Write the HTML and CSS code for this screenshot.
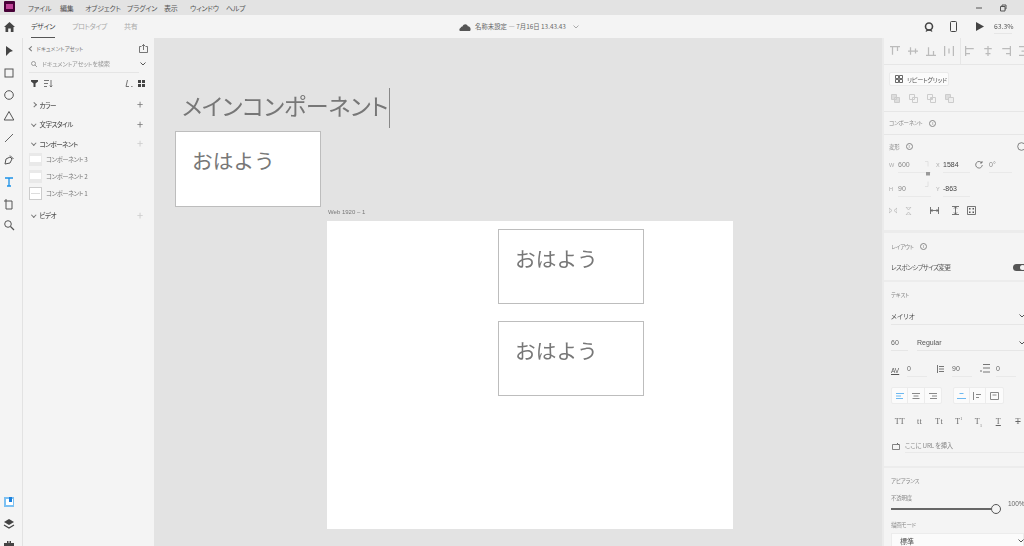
FILE: index.html
```html
<!DOCTYPE html>
<html lang="ja">
<head><meta charset="utf-8"><title>Adobe XD</title><link rel="stylesheet" href="styles.css"></head>
<body>
<div class="app">
  <header class="menubar">
    <svg class="xd" width="11" height="11" viewBox="0 0 11 11"><rect width="11" height="11" rx="1" fill="#470137"/><rect x="2" y="3" width="7" height="5" fill="#e75ab8" opacity=".75"/></svg>
    <nav class="menu"><span>ファイル</span><span>編集</span><span>オブジェクト</span><span>プラグイン</span><span>表示</span><span>ウィンドウ</span><span>ヘルプ</span></nav>
    <div class="winctl">
      <svg width="8" height="8" viewBox="0 0 8 8"><path d="M1 4h6" stroke="#555"/></svg>
      <svg width="8" height="8" viewBox="0 0 8 8"><path d="M1.500 2.500h4.500v4.500h-4.500zM3 2.500v-1.500h4v4h-1" fill="none" stroke="#555"/></svg>
      <svg width="8" height="8" viewBox="0 0 8 8"><path d="M1 1l6 6M7 1l-6 6" stroke="#555"/></svg>
    </div>
  </header>
  <div class="tabbar">
    <div class="tabs">
      <svg class="home" width="11" height="10" viewBox="0 0 11 10"><path d="M5.500 0L11 5H9.500v5H6.800V6.500H4.200V10H1.500V5H0z" fill="#444"/></svg>
      <span class="tab active">デザイン</span><span class="tab">プロトタイプ</span><span class="tab">共有</span>
    </div>
    <div class="doc">
      <svg width="12" height="8" viewBox="0 0 12 8"><path d="M1.500 8C0 8 0 5.500 1.500 5 2 3.500 3 3.500 3.500 3.500 4.500.5 8 .5 8.800 3.200 11 3 12.500 6 11 8z" fill="#555"/></svg>
      <span>名称未設定 — 7月16日 13.43.43</span>
      <svg class="chev" width="6" height="4" viewBox="0 0 6 4"><path d="M.5.500L3 3 5.500.500" fill="none" stroke="#aaa"/></svg>
    </div>
    <div class="view">
      <svg width="10" height="10" viewBox="0 0 10 10"><circle cx="5" cy="4.500" r="3.500" fill="none" stroke="#444" stroke-width="1.600"/><path d="M2 9.500c1-2 5-2 6 0" stroke="#444" fill="none" stroke-width="1.300"/></svg>
      <svg width="7" height="11" viewBox="0 0 7 11"><rect x=".5" y=".5" width="6" height="10" rx="1" fill="none" stroke="#444"/></svg>
      <svg width="8" height="9" viewBox="0 0 8 9"><path d="M0 0l8 4.500L0 9z" fill="#444"/></svg>
      <span class="zoomval">63.3%</span>
    </div>
  </div>
  <div class="main">
    <aside class="rail">
      <svg viewBox="0 0 12 12"><path d="M3 1l7 5-3 1-4 4z" fill="#444"/></svg>
      <svg viewBox="0 0 12 12"><rect x="2" y="2" width="8" height="8" fill="none" stroke="#555"/></svg>
      <svg viewBox="0 0 12 12"><circle cx="6" cy="6" r="4.300" fill="none" stroke="#555"/></svg>
      <svg viewBox="0 0 12 12"><path d="M6 1.500l4.800 8.500H1.200z" fill="none" stroke="#555"/></svg>
      <svg viewBox="0 0 12 12"><path d="M2 10l8-8" stroke="#666"/></svg>
      <svg viewBox="0 0 12 12"><path d="M2 10l1-5 4-2 2 2-2 4zM7 1.500l3.500 3.500" fill="none" stroke="#555"/></svg>
      <svg viewBox="0 0 12 12"><path d="M2 2h8M6 2v8M4 10h4" stroke="#1b91e8" stroke-width="1.300" fill="none"/></svg>
      <svg viewBox="0 0 12 12"><path d="M3 1v2M1 3h8v8H3V3" fill="none" stroke="#555"/></svg>
      <svg viewBox="0 0 12 12"><circle cx="5" cy="5" r="3.300" fill="none" stroke="#555"/><path d="M7.500 7.500L11 11" stroke="#555" stroke-width="1.200"/></svg>
      <div class="rail-bottom">
        <svg viewBox="0 0 12 12"><rect x="1" y="1" width="10" height="10" fill="#7cc0f2"/><rect x="3" y="3" width="7" height="6" fill="#fff"/><rect x="6" y="1" width="3" height="5" fill="#1b7fdc"/></svg>
        <svg viewBox="0 0 12 12"><path d="M6 1l5 3-5 3-5-3z" fill="#444"/><path d="M1 7l5 3 5-3" fill="none" stroke="#444" stroke-width="1.300"/></svg>
        <svg viewBox="0 0 12 12"><path d="M1 4h3V2h1.500v2h1V2H8v2h3v8H1z" fill="#444"/></svg>
      </div>
    </aside>
    <section class="assets">
      <div class="a-head"><i class="car left"></i><span>ドキュメントアセット</span>
        <svg class="push" width="9" height="9" viewBox="0 0 9 9"><path d="M2.500 2.500H.5v6h8v-6h-2M4.500 6V.5M3 2l1.500-1.500L6 2" fill="none" stroke="#555" stroke-width=".8"/></svg></div>
      <div class="a-search">
        <svg width="6" height="6" viewBox="0 0 6 6"><circle cx="2.500" cy="2.500" r="2" fill="none" stroke="#888" stroke-width=".8"/><path d="M4 4l2 2" stroke="#888" stroke-width=".8"/></svg>
        <span>ドキュメントアセットを検索</span>
        <svg class="a-chev" width="6" height="4" viewBox="0 0 6 4"><path d="M.5.500L3 3 5.500.500" fill="none" stroke="#555"/></svg>
      </div>
      <div class="a-tools">
        <svg width="7" height="7" viewBox="0 0 7 7"><path d="M0 0h7v1.500L4.500 3.500V7h-2V3.500L0 1.500z" fill="#444"/></svg>
        <svg width="9" height="7" viewBox="0 0 9 7"><path d="M0 .5h5M0 3.500h4M0 6.500h3M7 0v6.500M5.800 5.500L7 7l1.200-1.500" fill="none" stroke="#555" stroke-width=".8"/></svg>
        <svg class="push" width="8" height="7" viewBox="0 0 8 7"><path d="M2.500 0L1 6.500h3M6 6.500h.8M7.500 6.500H8" fill="none" stroke="#555" stroke-width=".8"/></svg>
        <svg width="7" height="7" viewBox="0 0 7 7"><path d="M0 0h3v3H0zM4 0h3v3H4zM0 4h3v3H0zM4 4h3v3H4z" fill="#444"/></svg>
      </div>
      <div class="a-sec sec-color"><i class="car right"></i><b>カラー</b><i class="plus">+</i></div>
      <div class="a-sec"><i class="car down"></i><b>文字スタイル</b><i class="plus">+</i></div>
      <div class="a-sec"><i class="car down"></i><b>コンポーネント</b><i class="plus dim">+</i></div>
      <div class="comps">
        <div class="comp"><div class="thumb"><em></em></div><span>コンポーネント 3</span></div>
        <div class="comp"><div class="thumb"><em></em></div><span>コンポーネント 2</span></div>
        <div class="comp"><div class="thumb boxed"><em></em></div><span>コンポーネント 1</span></div>
      </div>
      <div class="a-sec sec-video"><i class="car down"></i><b>ビデオ</b><i class="plus dim">+</i></div>
    </section>
    <main class="canvas">
      <div class="main-title">メインコンポーネント</div>
      <div class="caret"></div>
      <div class="card card-main">おはよう</div>
      <div class="ab-label">Web 1920 – 1</div>
      <div class="artboard"></div>
      <div class="card card-a">おはよう</div>
      <div class="card card-b">おはよう</div>
    </main>
    <aside class="props">
      <div class="p-align">
        <svg viewBox="0 0 8 8"><path d="M0 .5h8M2 1v6M6 1v3" stroke="#bbb" fill="none"/></svg>
        <svg viewBox="0 0 8 8"><path d="M0 4h8M2 1v6M6 2v4" stroke="#bbb" fill="none"/></svg>
        <svg viewBox="0 0 8 8"><path d="M0 7.500h8M2 1v6M6 4v3" stroke="#bbb" fill="none"/></svg>
        <svg viewBox="0 0 8 8"><path d="M.5 0v8M7.500 0v8M4 2v4" stroke="#bbb" fill="none"/></svg>
        <i class="vdiv"></i>
        <svg viewBox="0 0 8 8"><path d="M.5 0v8M1 2h6M1 6h3" stroke="#bbb" fill="none"/></svg>
        <svg viewBox="0 0 8 8"><path d="M4 0v8M1 2h6M2 6h4" stroke="#bbb" fill="none"/></svg>
        <svg viewBox="0 0 8 8"><path d="M7.500 0v8M1 2h6M4 6h3" stroke="#bbb" fill="none"/></svg>
        <svg viewBox="0 0 8 8"><path d="M0 .5h8M0 7.500h8M2 4h4" stroke="#bbb" fill="none"/></svg>
      </div>
      <div class="p-repeat">
        <button class="rg"><svg width="8" height="8" viewBox="0 0 8 8"><path d="M.5.500h3v3h-3zM4.500.500h3v3h-3zM.5 4.500h3v3h-3zM4.500 4.500h3v3h-3z" fill="none" stroke="#444" stroke-width=".8"/></svg><span>リピートグリッド</span></button>
        <div class="bool">
          <svg width="9" height="9" viewBox="0 0 9 9"><path d="M.5.500h5v5h-5zM3.500 3.500h5v5h-5z" fill="#ddd" stroke="#ccc"/></svg>
          <svg width="9" height="9" viewBox="0 0 9 9"><path d="M.5.500h5v5h-5zM3.500 3.500h5v5h-5z" fill="none" stroke="#ccc"/></svg>
          <svg width="9" height="9" viewBox="0 0 9 9"><path d="M.5.500h5v5h-5zM3.500 3.500h5v5h-5z" fill="none" stroke="#ccc"/><rect x="3.500" y="3.500" width="2" height="2" fill="#ccc"/></svg>
          <svg width="9" height="9" viewBox="0 0 9 9"><path d="M.5.500h5v5h-5z" fill="#ddd" stroke="#ccc"/><path d="M3.500 3.500h5v5h-5z" fill="#eee" stroke="#ccc"/></svg>
        </div>
      </div>
      <div class="p-label-row"><span class="lbl">コンポーネント</span><i class="info">i</i></div>
      <div class="p-trans">
        <div class="t-head"><span class="lbl">変形</span><i class="info">i</i>
          <svg class="t-flip" width="9" height="9" viewBox="0 0 9 9"><circle cx="4.500" cy="4.500" r="3.800" fill="none" stroke="#666" stroke-width=".8"/></svg></div>
        <div class="t-grid">
          <span class="k">W</span><span class="v dim">600</span><span class="k">X</span><span class="v">1584</span>
          <svg width="8" height="8" viewBox="0 0 8 8"><path d="M6.800 2A3.300 3.300 0 1 0 7.300 4M7 0v2H5" fill="none" stroke="#666" stroke-width=".8"/></svg><span class="v dim">0°</span>
          <span class="k">H</span><span class="v dim">90</span><span class="k">Y</span><span class="v">-863</span>
          <svg class="link" width="6" height="26" viewBox="0 0 6 26"><path d="M1 .5h3v5M1 25.500h3v-5" fill="none" stroke="#ddd" stroke-width=".8"/><rect x="2" y="11" width="4" height="3.500" fill="#999"/></svg>
        </div>
        <div class="t-icons">
          <svg width="8" height="7" viewBox="0 0 8 7"><path d="M0 1v5l3-2.500zM8 1v5L5 3.500z" fill="none" stroke="#bbb" stroke-width=".8"/></svg>
          <svg width="7" height="8" viewBox="0 0 7 8"><path d="M1 0h5L3.500 3zM1 8h5L3.500 5z" fill="none" stroke="#bbb" stroke-width=".8"/></svg>
          <svg class="gap" width="9" height="7" viewBox="0 0 9 7"><path d="M.5 0v7M8.500 0v7M1 3.500h7M2.500 2L1 3.500 2.500 5M6.500 2L8 3.500 6.500 5" fill="none" stroke="#555" stroke-width=".8"/></svg>
          <svg class="gap2" width="7" height="9" viewBox="0 0 7 9"><path d="M0 .5h7M0 8.500h7M3.500 1v7M2 2.500L3.500 1 5 2.500M2 6.500L3.500 8 5 6.500" fill="none" stroke="#555" stroke-width=".8"/></svg>
          <svg width="9" height="9" viewBox="0 0 9 9"><path d="M.5.500h8v8h-8z" fill="none" stroke="#555" stroke-width=".8"/><path d="M2 2h1.500v1.500H2zM5.500 2H7v1.500H5.500zM2 5.500h1.500V7H2zM5.500 5.500H7V7H5.500z" fill="#555"/></svg>
        </div>
      </div>
      <div class="p-layout">
        <div class="t-head"><span class="lbl">レイアウト</span><i class="info">i</i></div>
        <div class="resp"><span>レスポンシブサイズ変更</span><i class="toggle"></i></div>
      </div>
      <div class="p-text">
        <span class="lbl">テキスト</span>
        <div class="sel font"><span>メイリオ</span><svg width="6" height="4" viewBox="0 0 6 4"><path d="M.5.500L3 3 5.500.500" fill="none" stroke="#555"/></svg></div>
        <div class="size"><span class="sz">60</span><div class="sel weight"><span>Regular</span><svg width="6" height="4" viewBox="0 0 6 4"><path d="M.5.500L3 3 5.500.500" fill="none" stroke="#555"/></svg></div></div>
        <div class="metrics">
          <span class="av">AV</span><span class="m">0</span>
          <svg class="mi1" width="8" height="8" viewBox="0 0 8 8"><path d="M1.500 0v8M3 1.500h5M3 4h5M3 6.500h5" stroke="#555" stroke-width=".8" fill="none"/></svg><span class="m">90</span>
          <svg class="mi2" width="10" height="9" viewBox="0 0 10 9"><path d="M3 .5h7M3 4h7M3 8h7M0 7h2" stroke="#555" stroke-width=".8" fill="none"/></svg><span class="m">0</span>
        </div>
        <div class="aligns">
          <div class="grp">
            <b class="on"><svg width="8" height="6" viewBox="0 0 8 6"><path d="M0 .5h8M0 3h5M0 5.500h7" stroke="#6db8f0" fill="none"/></svg></b>
            <b><svg width="8" height="6" viewBox="0 0 8 6"><path d="M0 .5h8M1.500 3h5M.5 5.500h7" stroke="#888" fill="none"/></svg></b>
            <b><svg width="8" height="6" viewBox="0 0 8 6"><path d="M0 .5h8M3 3h5M1 5.500h7" stroke="#888" fill="none"/></svg></b>
          </div>
          <div class="grp">
            <b class="on"><svg width="9" height="6" viewBox="0 0 9 6"><path d="M2.500.5h4M0 5.500h9" stroke="#6db8f0" fill="none"/></svg></b>
            <b><svg width="9" height="8" viewBox="0 0 9 8"><path d="M.5 0v8M3 2.500h5M3 5.500h3" stroke="#888" fill="none"/></svg></b>
            <b><svg width="9" height="8" viewBox="0 0 9 8"><path d="M.5.500h8v7h-8zM2.500 3h4" stroke="#888" fill="none"/></svg></b>
          </div>
        </div>
        <div class="styles"><span>TT</span><span>tt</span><span>Tt</span><span>T<sup>1</sup></span><span>T<sub>1</sub></span><span class="u">T</span><span class="s">T</span></div>
        <div class="url"><svg width="8" height="7" viewBox="0 0 8 7"><path d="M.5 1.500h7v5h-7z" fill="none" stroke="#666" stroke-width=".8"/><path d="M5 0l2 2" stroke="#666"/></svg><span>ここに URL を挿入</span></div>
      </div>
      <div class="p-appear">
        <span class="lbl">アピアランス</span>
        <span class="lbl op">不透明度</span>
        <div class="slider"><i class="track"></i><i class="knob"></i><span>100%</span></div>
        <span class="lbl blend">描画モード</span>
        <div class="sel std"><span>標準</span><svg width="6" height="4" viewBox="0 0 6 4"><path d="M.5.500L3 3 5.500.500" fill="none" stroke="#555"/></svg></div>
      </div>
    </aside>
  </div>
</div>
</body>
</html>
```
FILE: styles.css
```css
*{box-sizing:border-box;margin:0;padding:0}
html,body{width:1024px;height:546px;overflow:hidden}
body{font-family:"Noto Sans CJK JP","Noto Sans",sans-serif;color:#555;background:#e3e3e3;font-feature-settings:"palt";filter:blur(.4px)}
i,em{font-style:normal}
.app{display:grid;grid-template-rows:15px 23px 508px;height:546px}
.menubar{display:flex;align-items:center;background:#e3e3e3;padding-left:4px;font-size:7px}
.xd{margin-top:-2px}
.menu{display:grid;grid-template-columns:32px 25px 42px 37px 26px 36px auto;margin-left:13px;color:#555;letter-spacing:-.2px}
.winctl{margin-left:auto;display:flex;gap:16px;margin-right:-7px}
.tabbar{display:grid;grid-template-columns:459px 1fr auto;align-items:center;background:#f4f4f4;font-size:7px}
.tabs{display:flex;align-items:center;padding-left:4px;height:23px}
.home{margin-right:16px}
.tab{margin-right:17px;color:#aaa;height:23px;line-height:22px;border-bottom:1px solid transparent;letter-spacing:-.4px}
.tab.active{color:#444;border-bottom:1px solid #555}
.doc{display:flex;align-items:center;gap:4px;font-size:6.400px;color:#666}
.chev{margin-left:3px}
.view{display:flex;align-items:center;padding-right:12px}
.view svg:nth-child(1){margin-right:16px}
.view svg:nth-child(2){margin-right:19px}
.view svg:nth-child(3){margin-right:10px}
.zoomval{font-size:6.800px;width:18px;color:#555;line-height:13px;border-bottom:1px solid #e6e6e6}
.main{display:grid;grid-template-columns:23px 131px 728px 142px;height:508px}
.rail{display:flex;flex-direction:column;align-items:center;background:#f4f4f4;border-right:1px solid #e2e2e2;padding-top:7px;gap:9.800px}
.rail svg{width:12px;height:12px;flex:none;margin-right:4px}
.rail-bottom{margin-top:auto;display:flex;flex-direction:column;gap:9.500px;margin-bottom:-5px}
.assets{background:#f4f4f4;padding:0 6px;font-size:6.500px}
.a-head{display:flex;align-items:center;height:21px;gap:3px;font-size:5.500px;color:#777}
.push{margin-left:auto}
.a-search{display:flex;align-items:center;height:17px;gap:5px;padding-left:2px;font-size:6.200px;letter-spacing:-.25px;color:#999;position:relative;margin-top:-4px}
.a-search::after{content:"";position:absolute;left:0;bottom:-1px;width:110px;height:1px;background:#e5e5e5}
.a-chev{margin-left:auto;margin-right:2px}
.a-tools{display:flex;align-items:center;gap:6px;height:21px;margin-top:1px;padding:0 3px 0 2px}
.a-tools .push+svg{margin-left:-1px}
.a-sec{display:flex;align-items:center;height:19.500px;font-size:6.500px;color:#555;padding-left:2px}
.sec-color{margin-top:1px}
.a-sec b{font-weight:500;margin-left:4px;letter-spacing:-.5px}
.car{display:block;width:3.500px;height:3.500px;border-right:1px solid #777;border-bottom:1px solid #777;flex:none;margin-left:1px}
.car.right{transform:rotate(-45deg)}
.car.left{transform:rotate(135deg)}
.car.down{transform:rotate(45deg);margin-top:-2px}
.plus{margin-left:auto;margin-right:5px;font-size:11px;line-height:11px;color:#777}
.plus.dim{color:#ccc}
.comps{margin-top:-3px}
.comp{display:flex;align-items:center;height:17px;gap:4px;font-size:6.300px;letter-spacing:-.45px;color:#777}
.thumb{width:13px;height:13px;background:#e9e9e9;display:flex;align-items:center;justify-content:center}
.thumb em{display:block;width:11px;height:6px;background:#fff}
.thumb.boxed{background:#fff;border:1px solid #ccc}
.thumb.boxed em{width:9px;height:1px;background:#ddd}
.sec-video{margin-top:4px}
.canvas{position:relative;background:#e3e3e3;overflow:hidden}
.main-title{position:absolute;left:28px;top:49px;font-size:23px;line-height:36px;color:#777;white-space:nowrap;letter-spacing:-.2px}
.caret{position:absolute;left:235px;top:50px;width:1px;height:40px;background:#888}
.card{position:absolute;width:146px;height:76px;background:#fff;border:1px solid #bdbdbd;font-size:20.700px;line-height:30px;color:#777;padding:13px 0 0 16px;font-feature-settings:normal}
.card-main{left:21px;top:93px}
.card-a{left:344px;top:191px;height:75px}
.card-b{left:344px;top:283px;height:75px}
.ab-label{position:absolute;left:174px;top:170px;font-size:6px;line-height:9px;color:#777;font-family:"Liberation Sans",sans-serif}
.artboard{position:absolute;left:173px;top:183px;width:406px;height:308px;background:#fff}
.props{background:#f4f4f4;border-left:2px solid #ebebeb;font-size:7px;overflow:hidden;width:142px}
.p-align{display:flex;align-items:center;height:28px;padding-left:6px;border-bottom:1px solid #e6e6e6;gap:8px;margin-top:-1px}
.p-align svg{width:10px;height:10px;flex:none}
.vdiv{width:1px;height:28px;background:#e6e6e6;margin:0 -4px 0 -2px;flex:none}
.p-repeat{height:47px;padding:7px 0 0 5px;border-bottom:1px solid #e6e6e6}
.rg{display:flex;align-items:center;gap:4px;width:60px;height:14px;padding-left:5px;background:#fbfbfb;border:1px solid #eaeaea;border-radius:2px;font:6.200px "Noto Sans CJK JP",sans-serif;font-feature-settings:"palt";letter-spacing:-.3px;color:#555;white-space:nowrap}
.bool{display:flex;gap:9px;padding:8px 0 0 2px}
.lbl{font-size:5.500px;color:#888;display:block;letter-spacing:-.25px}
.p-label-row{display:flex;align-items:center;gap:7px;height:23px;padding-left:5px;border-bottom:1px solid #e6e6e6}
.info{display:inline-flex;align-items:center;justify-content:center;width:7px;height:7px;border:1px solid #888;border-radius:50%;font-size:4.500px;line-height:5px;color:#777}
.p-trans{height:98px;padding:7px 0 0 5px;border-bottom:3px solid #ececec}
.t-head{display:flex;align-items:center;gap:6px;height:9px}
.t-flip{margin-left:auto;margin-right:-2px}
.t-grid{position:relative;display:grid;grid-template-columns:9px 38px 7px 32px 14px 28px;grid-auto-rows:24px;align-items:center;margin-top:2px;font-size:7px}
.link{position:absolute;left:35px;top:8px}
.k{font-size:5.500px;color:#aaa;font-family:"Liberation Sans",sans-serif}
.v{font-family:"Liberation Sans",sans-serif;color:#444;line-height:15px;height:16px;border-bottom:1px solid #e9e9e9;margin-right:5px}
.v.dim{color:#888}
.t-icons{display:flex;align-items:center;gap:8px;margin-top:5px}
.t-icons svg{flex:none}
.t-icons .gap{margin-left:10px}
.t-icons .gap2{margin-left:5px}
.p-layout{height:49px;padding:9px 0 0 7px;border-bottom:2px solid #ececec}
.resp{display:flex;align-items:center;justify-content:space-between;height:12px;margin-top:10px;font-size:6.500px;letter-spacing:-.6px;color:#555}
.toggle{width:16px;height:7px;border-radius:4px;background:#555;margin-right:-5px;position:relative}
.toggle::after{content:"";position:absolute;right:4px;top:1px;width:5px;height:5px;border-radius:50%;background:#f4f4f4}
.p-text{height:186px;padding:9px 0 0 7px;border-bottom:2px solid #ececec}
.sel{display:flex;align-items:center;justify-content:space-between;border-bottom:1px solid #e6e6e6;color:#555}
.sel svg{flex:none;margin-right:-1px}
.font{height:18px;margin-top:8px;font-size:6.800px}
.size{display:flex;height:26px;font-family:"Liberation Sans",sans-serif;font-size:7px}
.sz{width:17px;padding-top:10px;line-height:15px;margin-right:9px;border-bottom:1px solid #e6e6e6;color:#666}
.weight{flex:1;height:26px;padding-top:10px;font-family:"Liberation Sans",sans-serif}
.metrics{display:flex;align-items:flex-end;height:26px;font-family:"Liberation Sans",sans-serif;font-size:7px}
.metrics svg{margin-bottom:4px;flex:none}
.av{font-size:6.500px;width:16px;text-decoration:underline;color:#555;margin-bottom:3px}
.m{width:20px;height:17px;line-height:18px;border-bottom:1px solid #e9e9e9;color:#666}
.mi1{margin:0 8px 4px 9px}
.mi2{margin:0 6px 4px 8px}
.aligns{display:flex;gap:11px;margin-top:10px}
.grp{display:flex;height:17px;background:#fbfbfb;border:1px solid #ececec;border-radius:2px}
.grp b{width:16.300px;display:flex;align-items:center;justify-content:center;border-right:1px solid #ececec}
.grp b:last-child{border:0}
.styles{display:flex;margin:12.500px 0 0 -1px;font:8px "Liberation Serif",serif;color:#666}
.styles span{width:19.700px;flex:none;text-align:center;line-height:9px;letter-spacing:.3px}
.styles sup,.styles sub{font-size:4px;line-height:0}
.u{text-decoration:underline}
.s{text-decoration:line-through}
.url{display:flex;align-items:center;gap:5px;margin-top:13.500px;font-size:6.300px;letter-spacing:-.2px;color:#888;padding-left:1px}
.url span{flex:1;height:14px;line-height:13px;border-bottom:1px solid #e9e9e9}
.p-appear{padding:9px 0 0 7px}
.op{margin-top:9px}
.slider{position:relative;height:12px;margin-top:-1px}
.track{position:absolute;left:0;top:7px;width:100px;height:2px;background:#666}
.knob{position:absolute;left:100px;top:3px;width:10px;height:10px;border:1.500px solid #555;border-radius:50%;background:#f4f4f4}
.slider span{position:absolute;left:117px;top:-1px;font:6.500px "Liberation Sans",sans-serif;color:#666}
.blend{margin-top:8px}
.std{height:16px;margin:4px 0 0;background:#fbfbfb;padding:0 0 0 8px;font-size:7px;border:1px solid #ececec}
```
